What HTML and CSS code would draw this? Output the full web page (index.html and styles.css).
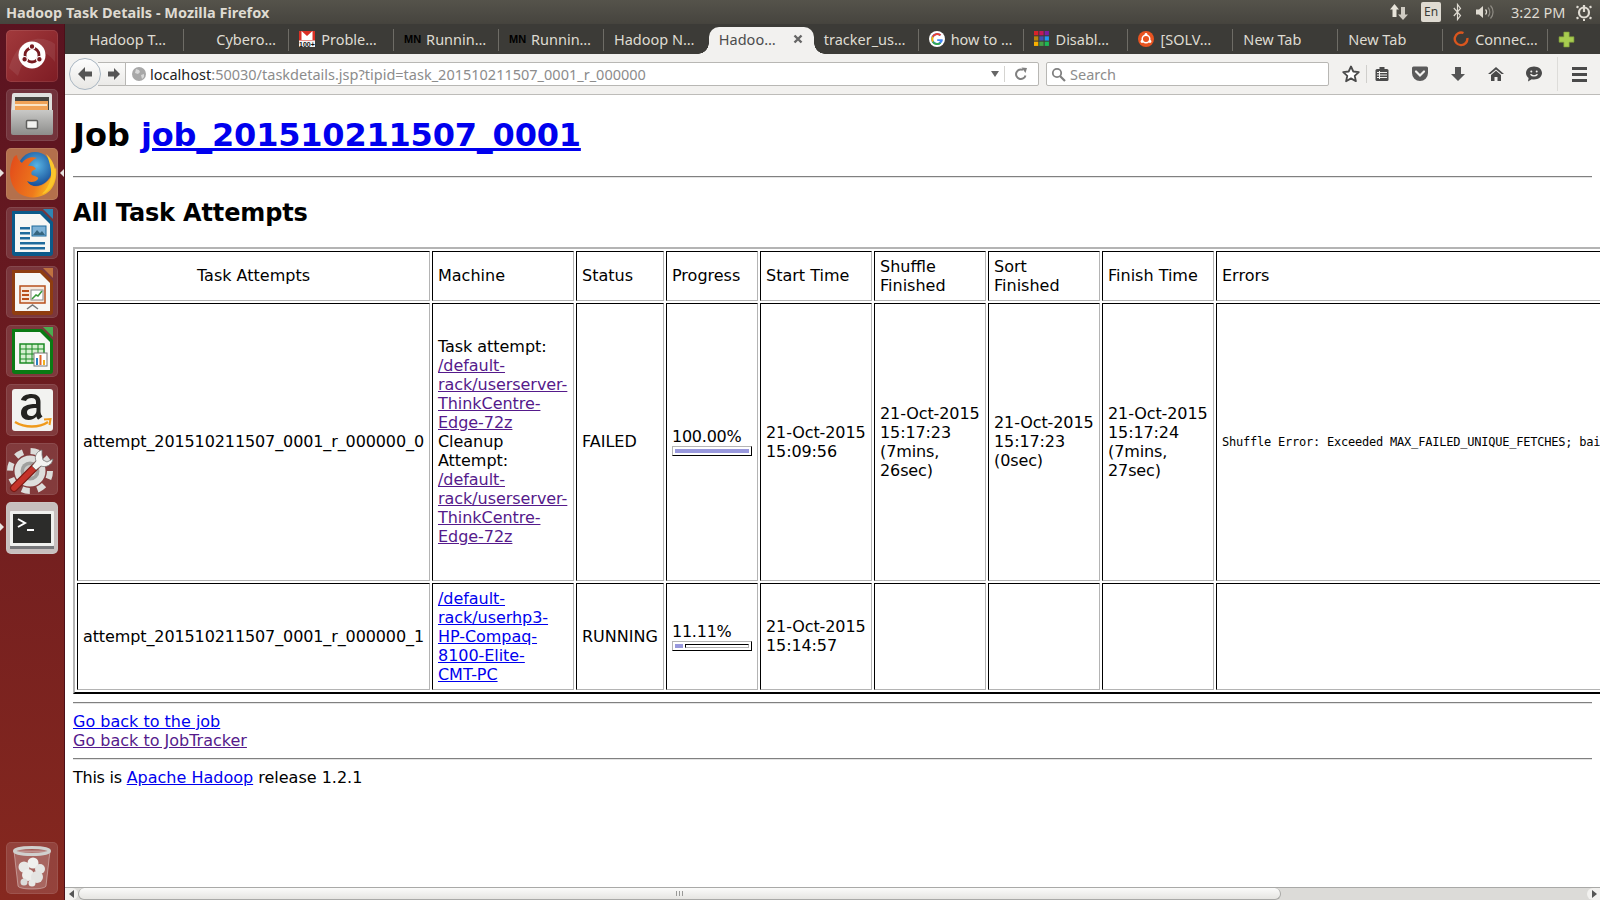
FILE: index.html
```html
<!DOCTYPE html>
<html lang="en">
<head>
<meta charset="utf-8">
<title>Hadoop Task Details - Mozilla Firefox</title>
<link rel="stylesheet" href="styles.css">
</head>
<body>
<header class="panel">
  <div class="panel-title">Hadoop Task Details - Mozilla Firefox</div>
  <div class="tray">
    <svg class="tray-net" width="18" height="18" viewBox="0 0 18 18"><path d="M4.500 1l4.500 5.500H6.500V14h-4V6.500H0z" fill="#e8e4da"/><path d="M13 17l5-5.500h-3V4h-4v7.500H8z" fill="#cfcbc2"/></svg>
    <span class="tray-en">En</span>
    <svg class="tray-bt" width="9" height="18" viewBox="0 0 9 18"><path d="M.8 5l6.700 7.500-3 4V1.500l3 4L.8 13" fill="none" stroke="#dfdbd2" stroke-width="1.200"/></svg>
    <svg class="tray-vol" width="19" height="18" viewBox="0 0 19 18"><path d="M0 6.500h3l4-3.500v12l-4-3.500H0z" fill="#dfdbd2"/><path d="M9.500 6.500a3.500 3.500 0 0 1 0 5" fill="none" stroke="#dfdbd2" stroke-width="1.300"/><path d="M12 4.500a6.500 6.500 0 0 1 0 9M14.500 2.500a9.500 9.500 0 0 1 0 13" fill="none" stroke="#8f8c84" stroke-width="1.200"/></svg>
    <span class="tray-clock">3:22 PM</span>
    <svg class="tray-power" width="16" height="18" viewBox="0 0 16 18"><circle cx="8" cy="9.500" r="5" fill="none" stroke="#dfdbd2" stroke-width="2.200"/><path d="M8 2v7" stroke="#dfdbd2" stroke-width="2.200"/><path d="M2.500 4.500l-2-1M13.500 4.500l2-1M2.500 14.500l-2 1M13.500 14.500l2 1M8 16v2" stroke="#dfdbd2" stroke-width="2"/></svg>
  </div>
</header>
<div class="desktop">
  <nav class="launcher">
    <div class="tile tile-bfb">
      <svg viewBox="0 0 52 52"><path d="M3 38C12 6 36 4 49 14v18C38 16 20 18 12 46z" fill="#ffffff14"/><circle cx="26" cy="25" r="13.500" fill="#fff"/><circle cx="26" cy="25" r="7" fill="none" stroke="#761a20" stroke-width="2.800"/><circle cx="26" cy="16.500" r="2.800" fill="#761a20" stroke="#fff" stroke-width="1.200"/><circle cx="18.600" cy="29.300" r="2.800" fill="#761a20" stroke="#fff" stroke-width="1.200"/><circle cx="33.400" cy="29.300" r="2.800" fill="#761a20" stroke="#fff" stroke-width="1.200"/></svg>
    </div>
    <div class="tile">
      <svg viewBox="0 0 52 52"><defs><linearGradient id="cab" x1="0" y1="0" x2="0" y2="1"><stop offset="0" stop-color="#c9c9c7"/><stop offset="1" stop-color="#8d8d8b"/></linearGradient></defs><path d="M6 6a2 2 0 0 1 2-2h36a2 2 0 0 1 2 2v18H5z" fill="#e0e0de"/><path d="M9 8h34v14H9z" fill="#45433f"/><path d="M9 12h33v10H9z" fill="#f0a258"/><path d="M9 15h32v2H9z" fill="#fbe3c5"/><path d="M5 21h42v23a2 2 0 0 1-2 2H7a2 2 0 0 1-2-2z" fill="url(#cab)"/><rect x="20.500" y="31.500" width="11" height="8" rx="1" fill="#f2f2f0" stroke="#5f5f5d" stroke-width="1.500"/></svg>
    </div>
    <div class="tile tile-active">
      <svg viewBox="0 0 52 52"><defs><radialGradient id="glb" cx=".55" cy=".4" r=".6"><stop offset="0" stop-color="#58b4e4"/><stop offset="1" stop-color="#174f98"/></radialGradient><linearGradient id="fox" x1="0" y1="0" x2="1" y2=".3"><stop offset="0" stop-color="#e2491a"/><stop offset=".7" stop-color="#ee7a1c"/><stop offset="1" stop-color="#f8b820"/></linearGradient></defs><circle cx="29" cy="21" r="17" fill="url(#glb)"/><path d="M7 11C2 23 3 38 14 46c11 6 25 4 32-6 4-6 5-14 4-21-3 8-6 13-12 17-6 4-14 3-17-3 4 2 9 1 11-2 1-2-3-3-6-4-2-3 1-5 4-6-1-3-6-4-8-3 2-4 6-7 9-8-7-2-12 1-15 5-3-2-5-5-5-8-3 1-3 2-4 4z" fill="url(#fox)"/><path d="M40 6c10 8 12 22 6 32-3 4-6 7-10 8 8-8 11-18 8-29-1-4-2-8-4-11z" fill="#fbc62c"/></svg>
    </div>
    <div class="tile">
      <svg viewBox="0 0 52 52"><path d="M6 4h30l11 11v31a3 3 0 0 1-3 3H9a3 3 0 0 1-3-3z" fill="#0b5a8a"/><path d="M37 2h10v10z" fill="#2f86b4"/><path d="M9 7h25l10 10v28H9z" fill="#f7f7f5"/><path d="M14 20h10v2.500H14zM14 25h10v2.500H14zM14 30h10v2.500H14zM14 35h25v2.500H14zM14 40h25v2.500H14z" fill="#1f6a9c"/><rect x="26" y="19" width="14" height="10" fill="#7fb2d6" stroke="#1f6a9c"/><path d="M27 28l4-5 3 3 2-2 3 4z" fill="#35657f"/></svg>
    </div>
    <div class="tile">
      <svg viewBox="0 0 52 52"><path d="M6 4h30l11 11v31a3 3 0 0 1-3 3H9a3 3 0 0 1-3-3z" fill="#8f3d10"/><path d="M37 2h10v10z" fill="#c07240"/><path d="M9 7h25l10 10v28H9z" fill="#f7f7f5"/><rect x="14" y="20" width="25" height="17" fill="#f6e8dc" stroke="#b8501c" stroke-width="1.500"/><path d="M16 24h7v2h-7zM16 28h7v2h-7zM16 32h7v2h-7z" fill="#b8501c"/><rect x="25" y="24" width="12" height="10" fill="#fff" stroke="#888"/><path d="M26 33l4-4 2 1 4-5" fill="none" stroke="#3b9a3b" stroke-width="1.500"/><path d="M21 43l5.500-4 5.500 4" fill="none" stroke="#777" stroke-width="1.500"/></svg>
    </div>
    <div class="tile">
      <svg viewBox="0 0 52 52"><path d="M6 4h30l11 11v31a3 3 0 0 1-3 3H9a3 3 0 0 1-3-3z" fill="#0b7a14"/><path d="M37 2h10v10z" fill="#4aae50"/><path d="M9 7h25l10 10v28H9z" fill="#f7f7f5"/><path d="M14 19h24v19H14z" fill="#d6f0d0" stroke="#1c8a24" stroke-width="1.500"/><path d="M14 24h24M14 29h24M14 34h24M20 19v19M26 19v19M32 19v19" stroke="#1c8a24"/><rect x="28" y="28" width="13" height="13" fill="#fff" stroke="#777"/><path d="M30 33h2v7h-2z" fill="#2a7fc4"/><path d="M33.500 30h2v10h-2z" fill="#e2662a"/><path d="M37 35h2v5h-2z" fill="#f0b020"/></svg>
    </div>
    <div class="tile">
      <svg viewBox="0 0 52 52"><rect x="6" y="5" width="41" height="42" rx="3" fill="#f2f2f0"/><path d="M26 10c-6 0-10 2-11 6l5 1c.6-2 3-3 5.500-3 3 0 4.500 1.500 4.500 4v2c-9 0-15 2-15 9 0 4 3 7 7.500 7 3.500 0 6-1.500 8-3.500 0 1 1 3 2 3l4-3c-1-1-2-3-2-5V18c0-5-3-8-9-8zm4.500 14v2c0 4-2.500 6-5.500 6-2.500 0-4-1.500-4-3.500 0-3.500 3.500-4.500 9.500-4.500z" fill="#232220"/><path d="M9 38c10 6 24 6 33 0" fill="none" stroke="#f09a1c" stroke-width="2.500"/><path d="M38 35.500l6.500-.5-1 6" fill="none" stroke="#f09a1c" stroke-width="2"/></svg>
    </div>
    <div class="tile">
      <svg viewBox="0 0 52 52"><circle cx="24" cy="28" r="20" fill="none" stroke="#dcdcda" stroke-width="6" stroke-dasharray="8 7.700"/><circle cx="24" cy="28" r="15.500" fill="#dededc"/><circle cx="24" cy="28" r="9.500" fill="#a0a09e"/><circle cx="24" cy="28" r="6" fill="#c9c9c7"/><path d="M8 45l24-24" stroke="#7a1a14" stroke-width="8" stroke-linecap="round"/><path d="M8 45l24-24" stroke="#c4332a" stroke-width="5.500" stroke-linecap="round"/><path d="M36 7c-5 1-8 6-6 11l-4 5 4 4 5-4c5 2 11-1 12-7l-6 3-4-2-1-5z" fill="#f4f4f2" stroke="#777" stroke-width=".8"/></svg>
    </div>
    <div class="tile tile-term">
      <svg viewBox="0 0 52 52"><rect x="4" y="9" width="44" height="35" rx="1" fill="#f0f0ee"/><rect x="7" y="12" width="38" height="29" fill="#2c2c2a"/><path d="M12 17l7 4-7 4" fill="none" stroke="#fff" stroke-width="2"/><path d="M21 27h7v2h-7z" fill="#fff"/><path d="M4 44h44v3H4z" fill="#77777a"/></svg>
    </div>
    <div class="tile tile-trash">
      <svg viewBox="0 0 52 52"><path d="M8 9l4 35c1 4 27 4 28 0l4-35z" fill="#ffffff30" stroke="#ffffff60"/><circle cx="18" cy="25" r="5.500" fill="#e8e8e6"/><circle cx="27" cy="21" r="5.500" fill="#f0f0ee"/><circle cx="34" cy="27" r="5" fill="#e6e6e4"/><circle cx="22" cy="33" r="6" fill="#eeeeec"/><circle cx="31" cy="35" r="6" fill="#e4e4e2"/><circle cx="18" cy="40" r="3.500" fill="#dcdcda"/><circle cx="26" cy="41" r="3.500" fill="#e8e8e6"/><ellipse cx="26" cy="9" rx="17.500" ry="3.500" fill="#ffffff22" stroke="#d0d0ce" stroke-width="3"/></svg>
    </div>
    <span class="pip pip-l pip-ff"></span><span class="pip pip-r pip-ff"></span><span class="pip pip-l pip-tm"></span>
  </nav>
  <div class="window">
    <div class="tabs">
      <div class="tab"><span>Hadoop T…</span></div>
      <div class="tab"><span class="fav"></span><span>Cybero…</span></div>
      <div class="tab"><svg class="fav fav-tall" viewBox="0 0 16 16"><path d="M0 0h16v12H0z" fill="#d93025"/><path d="M2.500 0l5.500 5 5.500-5v9h-11z" fill="#fff"/><rect x="0" y="9.500" width="16" height="6.500" fill="#f4f4f4"/><text class="fav-num" x="0" y="15.500">100+</text></svg><span>Proble…</span></div>
      <div class="tab"><b class="mn">MN</b><span>Runnin…</span></div>
      <div class="tab"><b class="mn">MN</b><span>Runnin…</span></div>
      <div class="tab tab-plain"><span>Hadoop N…</span></div>
      <div class="tab tab-active"><span>Hadoo…</span><svg class="tab-x" viewBox="0 0 10 10"><path d="M1.500 1.500l7 7M8.500 1.500l-7 7" stroke="#666" stroke-width="2.400"/></svg></div>
      <div class="tab"><span>tracker_us…</span></div>
      <div class="tab"><svg class="fav" viewBox="0 0 16 16"><circle cx="8" cy="8" r="8" fill="#fff"/><path d="M13 8.200H8.200v1.900h2.700c-.4 1.200-1.400 1.900-2.700 1.900a4 4 0 1 1 2.600-7l1.400-1.400A6 6 0 1 0 14 8.800z" fill="#4285f4"/><path d="M2.900 5.300l1.600 1.200a4 4 0 0 1 6.300-1.500l1.400-1.400a6 6 0 0 0-9.300 1.700z" fill="#ea4335"/><path d="M3 11.200l1.600-1.300a4 4 0 0 0 6.100 1.300l1.500 1.200A6 6 0 0 1 3 11.200z" fill="#34a853"/><path d="M2.900 5.300a6 6 0 0 0 .1 5.900l1.600-1.300a4 4 0 0 1-.1-3.400z" fill="#fbbc05"/></svg><span>how to …</span></div>
      <div class="tab"><svg class="fav" viewBox="0 0 15 15"><path d="M0 0h4v4H0z" fill="#d8232a"/><path d="M5 0h4v4H5z" fill="#c2185b"/><path d="M10 0h4v4h-4z" fill="#7b1fa2"/><path d="M0 5h4v4H0z" fill="#b8860b"/><path d="M5 5h4v4H5z" fill="#3f51b5"/><path d="M10 5h4v4h-4z" fill="#2196f3"/><path d="M0 10h4v4H0z" fill="#f9b000"/><path d="M5 10h4v4H5z" fill="#43a047"/><path d="M10 10h4v4h-4z" fill="#1db954"/></svg><span>Disabl…</span></div>
      <div class="tab"><svg class="fav" viewBox="0 0 16 16"><circle cx="8" cy="8" r="8" fill="#e95420"/><circle cx="8" cy="8" r="3.800" fill="none" stroke="#fff" stroke-width="1.500"/><circle cx="8" cy="3.500" r="1.400" fill="#fff"/><circle cx="4" cy="10.500" r="1.400" fill="#fff"/><circle cx="12" cy="10.500" r="1.400" fill="#fff"/></svg><span>[SOLV…</span></div>
      <div class="tab"><span>New Tab</span></div>
      <div class="tab"><span>New Tab</span></div>
      <div class="tab"><svg class="fav" viewBox="0 0 16 16"><path d="M10.500 2A6.300 6.300 0 1 0 14.300 7" fill="none" stroke="#d9561e" stroke-width="2.400"/></svg><span>Connec…</span></div>
      <svg class="plus" viewBox="0 0 16 16"><path d="M5.500 1h5v4.500H15v5h-4.500V15h-5v-4.500H1v-5h4.500z" fill="#a8cc50" stroke="#7f9e38" stroke-width=".6"/></svg>
    </div>
    <div class="toolbar">
      <div class="back"><svg width="16" height="16" viewBox="0 0 16 16"><path d="M8 1L1 8l7 7v-4.500h7v-5H8z" fill="#555"/></svg></div>
      <div class="forward"><svg width="14" height="14" viewBox="0 0 14 14"><path d="M7 1l6 6-6 6V9.500H1v-5h6z" fill="#555"/></svg></div>
      <div class="urlbar">
        <svg class="globe" width="14" height="14" viewBox="0 0 14 14"><circle cx="7" cy="7" r="7" fill="#a8a8a8"/><path d="M4 2l3 1 1 2-2 2-3-1zM9 8l3-1 0 3-2 2z" fill="#d8d8d8"/></svg>
        <span class="url"><span class="url-host">localhost</span>:50030/taskdetails.jsp?tipid=task_201510211507_0001_r_000000</span>
        <svg class="drop" width="8" height="6" viewBox="0 0 8 6"><path d="M0 0h8L4 6z" fill="#666"/></svg>
        <span class="url-sep"></span>
        <svg width="14" height="14" viewBox="0 0 14 14"><path d="M11.500 8.500A4.800 4.800 0 1 1 9 2.900" fill="none" stroke="#808080" stroke-width="2"/><path d="M7.500 0.500l5.500.5-1.500 5z" fill="#808080"/></svg>
      </div>
      <div class="searchbar">
        <svg width="15" height="15" viewBox="0 0 15 15"><circle cx="6" cy="6" r="4.200" fill="none" stroke="#808080" stroke-width="1.800"/><path d="M9 9l5 5" stroke="#808080" stroke-width="2.200"/></svg>
        <span class="search-text">Search</span>
      </div>
      <div class="tool-icons">
        <svg width="18" height="18" viewBox="0 0 18 18"><path d="M9 1.500l2.300 5 5.500.6-4.100 3.700 1.200 5.400L9 13.400 4.100 16.200l1.200-5.400L1.200 7.100l5.500-.6z" fill="#fff" stroke="#4a4a4a" stroke-width="1.800" stroke-linejoin="round"/></svg>
        <span class="tool-sep"></span>
        <svg class="i-list" width="16" height="16" viewBox="0 0 16 16"><rect x="1.500" y="3" width="13" height="12" rx="1.500" fill="#4a4a4a"/><rect x="5.500" y="1" width="5" height="3" fill="#4a4a4a"/><path d="M3 6.500h10M3 9h10M3 11.500h10M5.500 5v8" stroke="#f2f1ef" stroke-width="1"/></svg>
        <svg class="i-pocket" width="18" height="16" viewBox="0 0 18 16"><path d="M1 2a1.500 1.500 0 0 1 1.500-1.500h13A1.500 1.500 0 0 1 17 2v5a8 8 0 0 1-16 0z" fill="#5a5a5a"/><path d="M5 5.500l4 4 4-4" fill="none" stroke="#f2f1ef" stroke-width="2.200" stroke-linecap="round"/></svg>
        <svg class="i-dl" width="16" height="16" viewBox="0 0 16 16"><path d="M5 1h6v7h4l-7 7-7-7h4z" fill="#555"/></svg>
        <svg class="i-home" width="18" height="16" viewBox="0 0 18 16"><path d="M9 1L1 8h2.500L9 3.500 14.500 8H17z" fill="#4a4a4a"/><path d="M4 9l5-4.200L14 9v6h-3.500v-4h-3v4H4z" fill="#4a4a4a"/></svg>
        <svg class="i-chat" width="18" height="18" viewBox="0 0 18 18"><path d="M9 1.500c4.500 0 8 2.800 8 6.500s-3.500 6.500-8 6.500c-.8 0-1.500-.1-2.200-.2L3 16.500l.6-3.600C2 11.700 1 10 1 8c0-3.700 3.500-6.500 8-6.500z" fill="#4a4a4a"/><circle cx="6.300" cy="6.500" r="1" fill="#f2f1ef"/><circle cx="11.700" cy="6.500" r="1" fill="#f2f1ef"/><path d="M5.500 9.300c2 2.200 5 2.200 7 0" fill="none" stroke="#f2f1ef" stroke-width="1.300"/></svg>
      </div>
      <div class="menu-btn"><i></i><i></i><i></i></div>
    </div>
    <main class="viewport">
      <div class="page">
        <h1>Job <a class="job-link" href="#job">job_201510211507_0001</a></h1>
        <hr>
        <h2>All Task Attempts</h2>
        <table class="attempts">
          <colgroup>
            <col class="c-att"><col class="c-mach"><col class="c-stat"><col class="c-prog"><col class="c-time"><col class="c-time"><col class="c-time"><col class="c-time"><col>
          </colgroup>
          <thead>
            <tr><td class="center one">Task Attempts</td><td class="one">Machine</td><td class="one">Status</td><td class="one">Progress</td><td class="one">Start Time</td><td>Shuffle Finished</td><td>Sort Finished</td><td class="one">Finish Time</td><td class="one">Errors</td></tr>
          </thead>
          <tbody>
            <tr class="row-failed">
              <td class="num">attempt_201510211507_0001_r_000000_0</td>
              <td class="mach">Task attempt: <a class="seen" href="#m1">/default-rack/userserver-ThinkCentre-Edge-72z</a><br>Cleanup Attempt: <a class="seen" href="#m1">/default-rack/userserver-ThinkCentre-Edge-72z</a></td>
              <td>FAILED</td>
              <td><div class="pct">100.00%</div><div class="bar"><span class="fill fill-all"></span></div></td>
              <td class="num">21-Oct-2015 15:09:56</td>
              <td class="num">21-Oct-2015 15:17:23 (7mins, 26sec)</td>
              <td class="num">21-Oct-2015 15:17:23 (0sec)</td>
              <td class="num">21-Oct-2015 15:17:24 (7mins, 27sec)</td>
              <td><pre class="err">Shuffle Error: Exceeded MAX_FAILED_UNIQUE_FETCHES; bailing-out.</pre></td>
            </tr>
            <tr class="row-running">
              <td class="num">attempt_201510211507_0001_r_000000_1</td>
              <td class="mach"><a href="#m2">/default-rack/userhp3-HP-Compaq-8100-Elite-<span class="nowrap">CMT-PC</span></a></td>
              <td>RUNNING</td>
              <td><div class="pct">11.11%</div><div class="bar"><span class="fill fill-part"></span><span class="rest"></span></div></td>
              <td class="num">21-Oct-2015 15:14:57</td>
              <td></td><td></td><td></td><td></td>
            </tr>
          </tbody>
        </table>
        <hr class="hr-after">
        <a href="#job">Go back to the job</a><br>
        <a class="seen" href="#jt">Go back to JobTracker</a>
        <hr class="hr-foot">
        <div><span class="lead">This is </span><a href="#hadoop">Apache Hadoop</a> release 1.2.1</div>
      </div>
    </main>
    <div class="hscroll">
      <span class="sb-btn sb-left"><svg width="6" height="8" viewBox="0 0 6 8"><path d="M5 0v8L0 4z" fill="#555"/></svg></span>
      <div class="sb-track"><div class="sb-thumb"></div></div>
      <span class="sb-btn sb-right"><svg width="6" height="8" viewBox="0 0 6 8"><path d="M1 0v8l5-4z" fill="#555"/></svg></span>
    </div>
  </div>
</div>
</body>
</html>
```
FILE: styles.css
```css
* { box-sizing: border-box; }
html, body { margin: 0; height: 100%; }
body { width: 1600px; height: 900px; overflow: hidden; display: flex; flex-direction: column; background: #fff; font-family: "DejaVu Sans", sans-serif; font-size: 16px; color: #000; }

.panel { height: 24px; flex: none; display: flex; align-items: center; justify-content: space-between; padding: 0 8px 0 6px; background: linear-gradient(#55534b, #46443e); color: #dfdbd2; font-family: "Noto Sans", sans-serif; }
.panel-title { font-size: 14.500px; font-weight: 700; }
.tray { display: flex; align-items: center; }
.tray-net { margin-right: 13px; }
.tray-en { width: 20px; height: 20px; margin-right: 12px; background: #dfdbd2; color: #3c3b37; border-radius: 2px; font-size: 12px; line-height: 20px; text-align: center; }
.tray-bt { margin-right: 14px; }
.tray-vol { margin-right: 16px; }
.tray-clock { font-size: 14.500px; margin-right: 14px; width: 51px; white-space: nowrap; }

.desktop { flex: 1; min-height: 0; display: flex; }
.launcher { position: relative; width: 65px; flex: none; display: flex; flex-direction: column; gap: 7px; padding: 6px 0 6px 6px; background: linear-gradient(#5a1320, #86281f); border-right: 1px solid #4b0f18; }
.tile { width: 52px; height: 52px; flex: none; border-radius: 5px; background: rgba(255,255,255,.13); box-shadow: inset 0 0 0 1px rgba(255,255,255,.09); }
.tile svg { display: block; width: 52px; height: 52px; }
.tile-bfb { background: linear-gradient(135deg, #a23a3c, #7e1c24); }
.tile-active { background: #b4704c; }
.tile-term { background: #c7bfbe; }
.tile-trash { margin-top: auto; }
.pip { position: absolute; width: 0; height: 0; border-style: solid; border-width: 4px 0 4px 4px; border-color: transparent transparent transparent #e8e2df; left: 0; }
.pip-r { left: 60px; border-width: 4px 4px 4px 0; border-color: transparent #e8e2df transparent transparent; }
.pip-ff { top: 145px; }
.pip-tm { top: 499px; }

.window { flex: 1; min-width: 0; display: flex; flex-direction: column; }
.tabs { height: 30px; flex: none; display: flex; background: #3c3b37; padding: 5px 0 0 14.400px; font-family: "Noto Sans", sans-serif; font-size: 14.500px; color: #dfdbd2; }
.tab { width: 104.920px; flex: none; height: 22px; display: flex; align-items: center; gap: 6px; padding: 0 0 2px 10px; border-right: 1px solid #6e6c66; white-space: nowrap; }
.tab-plain { border-right: 0; }
.tab-active { position: relative; height: 27px; margin-top: -2px; padding: 0 11px 3px 10px; border-right: 0; background: #f2f1ef; color: #4c4c4c; border-radius: 10px 10px 0 0; }
.tab-active::before, .tab-active::after { content: ""; position: absolute; bottom: 0; width: 11px; height: 11px; }
.tab-active::before { left: -11px; background: radial-gradient(circle at 0 0, transparent 10.500px, #f2f1ef 11px); }
.tab-active::after { right: -11px; background: radial-gradient(circle at 100% 0, transparent 10.500px, #f2f1ef 11px); }
.fav { width: 16px; height: 16px; flex: none; }
.fav-num { font: bold 7px "Liberation Sans", sans-serif; fill: #111; }
.mn { width: 16px; flex: none; font: bold 11px "Liberation Sans", sans-serif; color: #000; }
.tab-x { width: 10px; height: 10px; margin-left: auto; }
.plus { width: 17px; height: 17px; margin: 2px 0 0 10px; }

.toolbar { height: 41px; flex: none; position: relative; display: flex; align-items: center; padding: 0 0 0 4px; background: #f2f1ef; border-bottom: 1px solid #bdbcb9; }
.back { position: relative; z-index: 1; width: 32px; height: 32px; border-radius: 50%; background: linear-gradient(#fdfdfd, #e8e7e4); border: 1px solid #a9b6c2; display: flex; align-items: center; justify-content: center; }
.forward { width: 29px; height: 24px; margin-left: -3px; padding-left: 3px; background: linear-gradient(#fbfbfa, #ebeae8); border: 1px solid #b8b7b4; border-left: 0; display: flex; align-items: center; justify-content: center; }
.urlbar { width: 914px; height: 24px; display: flex; align-items: center; padding: 0 10px 0 6px; background: #fff; border: 1px solid #b8b7b4; border-radius: 0 2px 2px 0; margin-left: -2px; }
.globe { margin-right: 4px; }
.url { flex: 1; font: 14.500px "Noto Sans", sans-serif; color: #8c8c8c; white-space: nowrap; }
.url-host { color: #222; }
.url-sep { width: 1px; height: 16px; background: #d5d4d1; margin: 0 9px 0 5px; }
.searchbar { width: 283px; height: 24px; margin-left: 7px; display: flex; align-items: center; gap: 4px; padding-left: 4px; background: #fff; border: 1px solid #b8b7b4; border-radius: 2px; }
.search-text { font: 14.500px "Noto Sans", sans-serif; color: #8c8c8c; }
.tool-icons { display: flex; align-items: center; margin-left: 13px; }
.tool-sep { width: 1px; height: 18px; background: #d0cfcc; margin: 0 7px 0 6px; }
.i-pocket { margin-left: 21px; }
.i-dl { margin-left: 21px; }
.i-home { margin-left: 21px; }
.i-chat { margin-left: 20px; }
.menu-btn { margin-left: auto; width: 43px; height: 34px; border-left: 1px solid #dddcd9; display: flex; flex-direction: column; align-items: flex-end; justify-content: center; gap: 3px; padding-right: 13px; }
.menu-btn i { width: 15px; height: 3px; background: #4a4a4a; }

.viewport { flex: 1; min-height: 0; overflow: hidden; }
.page { padding: 0 8px; width: 1535px; }
h1 { font-size: 32px; font-weight: bold; margin: 21px 0 22px; }
.job-link { letter-spacing: -.2px; }
h2 { font-size: 24px; font-weight: bold; margin: 21px 0 20px; letter-spacing: -.15px; }
hr { margin: 8px 0; border: 0; border-top: 1px solid #808080; border-bottom: 1px solid #e4e4e4; }
a { color: #0000ee; }
a.seen { color: #551a8b; }

.attempts { table-layout: fixed; width: 1650px; border-collapse: separate; border-spacing: 2px; border: 2px solid; border-color: #b4b4b4 #000 #000 #b4b4b4; margin: 0; }
.c-att { width: 353px; }
.c-mach { width: 142px; }
.c-stat { width: 88px; }
.c-prog { width: 92px; }
.c-time { width: 112px; }
.attempts td { padding: 5px; border: 1px solid; border-color: #000 #b4b4b4 #b4b4b4 #000; vertical-align: middle; }
.attempts td.one, .attempts tbody td { padding-bottom: 6px; }
.attempts .row-running td.mach { padding-bottom: 5px; }
.center { text-align: center; }
.num { letter-spacing: -.11px; }
.mach { letter-spacing: -.05px; }
.nowrap { white-space: nowrap; }
.row-failed td { height: 278px; }
.row-running td { height: 107px; }
.pct { line-height: 19px; letter-spacing: -.25px; }
.bar { width: 80px; height: 10px; display: flex; gap: 2px; padding: 2px; border: 1px solid; border-color: #b4b4b4 #000 #000 #b4b4b4; }
.fill { display: block; height: 100%; background: #9999dd; }
.fill-all { width: 100%; }
.fill-part { width: 8px; }
.rest { flex: 1; border: 1px solid; border-color: #000 #b4b4b4 #b4b4b4 #000; }
.err { margin: 0; font: 12px "DejaVu Sans Mono", monospace; letter-spacing: -.22px; white-space: pre; }
.lead { letter-spacing: -.25px; }

.hr-after { margin-top: 8px; }
.hr-foot { margin: 8px 0; }

.hscroll { height: 13px; flex: none; display: flex; align-items: stretch; background: #dcdbd8; border-top: 1px solid #a9a9a7; }
.sb-btn { width: 13px; display: flex; align-items: center; justify-content: center; background: #f2f1ef; flex: none; }
.sb-left { border-radius: 0 6px 6px 0; }
.sb-right { border-radius: 6px 0 0 6px; }
.sb-track { flex: 1; min-width: 0; }
.sb-thumb { position: relative; width: 79.700%; height: 100%; background: linear-gradient(#fbfbfa, #e6e5e2); border: 1px solid #a9a9a7; border-width: 0 1px 1px; border-radius: 6px; }
.sb-thumb::after { content: ""; position: absolute; left: 50%; top: 3px; width: 7px; height: 5px; margin-left: -3px; background: repeating-linear-gradient(90deg, #9a9a98 0 1px, transparent 1px 3px); }
```
